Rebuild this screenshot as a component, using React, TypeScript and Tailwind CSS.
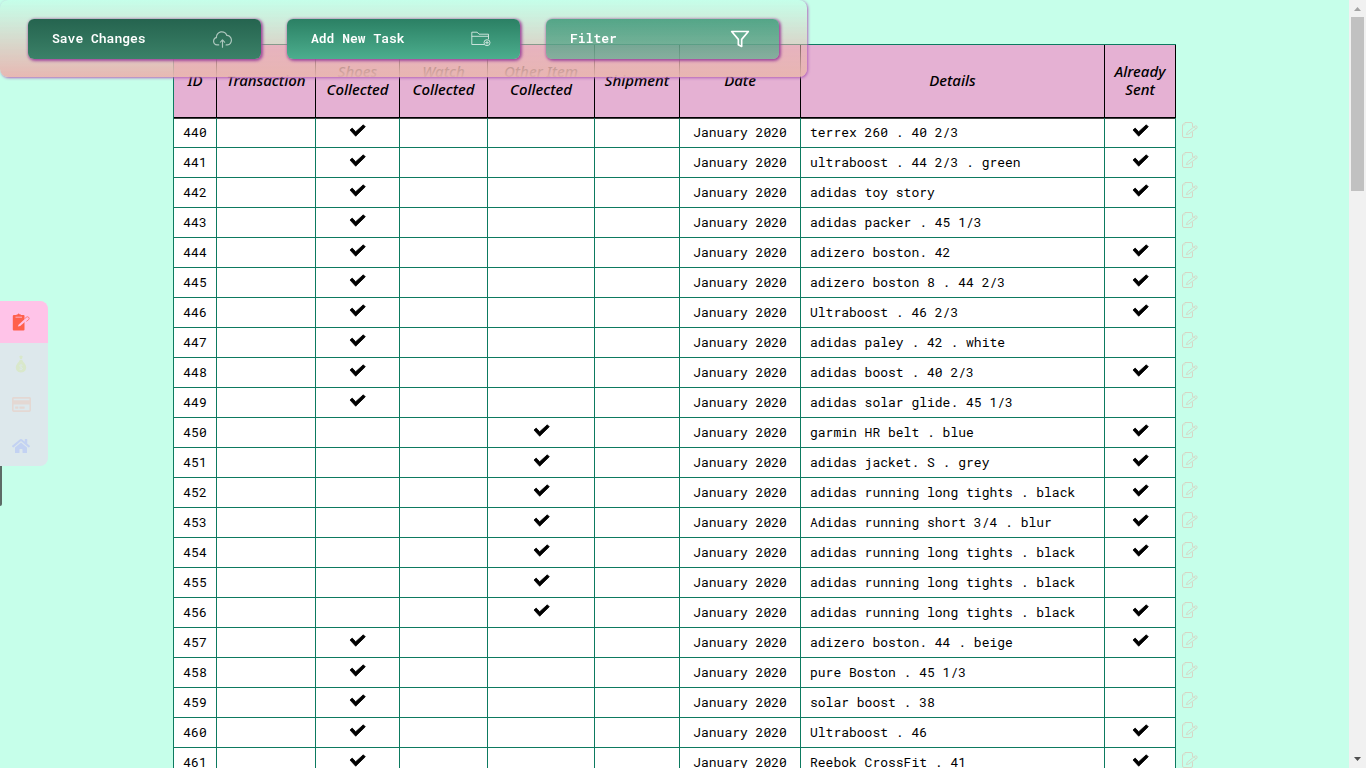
import React from "react";
import { SlCloudUpload } from "react-icons/sl";
import { FiFilter } from "react-icons/fi";
import { FaHome, FaRegCreditCard } from "react-icons/fa";

type Task = { id: number; item: "shoes" | "other"; details: string; sent: boolean };

const tasks: Task[] = [
  { id: 440, item: "shoes", details: "terrex 260 . 40 2/3", sent: true },
  { id: 441, item: "shoes", details: "ultraboost . 44 2/3 . green", sent: true },
  { id: 442, item: "shoes", details: "adidas toy story", sent: true },
  { id: 443, item: "shoes", details: "adidas packer . 45 1/3", sent: false },
  { id: 444, item: "shoes", details: "adizero boston. 42", sent: true },
  { id: 445, item: "shoes", details: "adizero boston 8 . 44 2/3", sent: true },
  { id: 446, item: "shoes", details: "Ultraboost . 46 2/3", sent: true },
  { id: 447, item: "shoes", details: "adidas paley . 42 . white", sent: false },
  { id: 448, item: "shoes", details: "adidas boost . 40 2/3", sent: true },
  { id: 449, item: "shoes", details: "adidas solar glide. 45 1/3", sent: false },
  { id: 450, item: "other", details: "garmin HR belt . blue", sent: true },
  { id: 451, item: "other", details: "adidas jacket. S . grey", sent: true },
  { id: 452, item: "other", details: "adidas running long tights . black", sent: true },
  { id: 453, item: "other", details: "Adidas running short 3/4 . blur", sent: true },
  { id: 454, item: "other", details: "adidas running long tights . black", sent: true },
  { id: 455, item: "other", details: "adidas running long tights . black", sent: false },
  { id: 456, item: "other", details: "adidas running long tights . black", sent: true },
  { id: 457, item: "shoes", details: "adizero boston. 44 . beige", sent: true },
  { id: 458, item: "shoes", details: "pure Boston . 45 1/3", sent: false },
  { id: 459, item: "shoes", details: "solar boost . 38", sent: false },
  { id: 460, item: "shoes", details: "Ultraboost . 46", sent: true },
  { id: 461, item: "shoes", details: "Reebok CrossFit . 41", sent: true },
];

const columns = [
  { title: "ID", width: "w-[43px]" },
  { title: "Transaction", width: "w-[99px]" },
  { title: "Shoes Collected", width: "w-[84px]" },
  { title: "Watch Collected", width: "w-[88px]" },
  { title: "Other Item Collected", width: "w-[107px]" },
  { title: "Shipment", width: "w-[85px]" },
  { title: "Date", width: "w-[121px]" },
  { title: "Details", width: "w-[304px]" },
  { title: "Already Sent", width: "w-[71px]" },
];

function EditIcon() {
  return (
    <svg width="16" height="16" viewBox="0 0 16 16" fill="none" stroke="currentColor" strokeLinejoin="round" strokeLinecap="round">
      <path d="M10.5 4.5V2Q10.5 .5 9 .5H3L.5 3V14Q.5 15.5 2 15.5H9Q10.5 15.5 10.5 14V10.5" />
      <path d="M3 1V3H1" strokeWidth=".5" />
      <path d="M4.5 12.3L5.3 10.2L12.8 4.2Q13.8 3.5 14.8 4.2Q15.6 5.2 14.8 6.2L7 11.8ZM12 4.8L13.9 6.8" strokeWidth=".9" />
    </svg>
  );
}

function FolderIcon() {
  return (
    <svg width="20" height="16" viewBox="0 0 20 16" fill="none" stroke="currentColor" strokeWidth=".9">
      <path d="M13 13.5H.8V1.2H6.2L8 3.2H17.5V8.2M.8 5.3H17.5" />
      <circle cx="16" cy="11.7" r="3" />
      <path d="M16 9.8V13.6M14.2 11.7H17.8" />
    </svg>
  );
}

function ClipboardIcon() {
  return (
    <svg width="18" height="18" viewBox="0 0 18 18">
      <path fill="currentColor" d="M2 2H4.5V1.5H5.5Q6.5-.5 7.8 1.5H9V2H11.5Q12.5 2 12.5 3V16.5Q12.5 17.5 11.5 17.5H1.8Q.8 17.5 .8 16.5V3Q.8 2 2 2Z" />
      <path d="M3.5 4.2H10" stroke="#ffc3e8" strokeWidth=".8" />
      <path d="M5.8 13.6L6.6 11.8L13.9 5L15.6 6.6L8.2 13Z" fill="#ffc3e8" />
      <path d="M12.6 5.8L14.2 4.3Q15.5 3.2 16.8 4.4Q17.7 5.6 16.6 6.7L14.4 8.4" fill="none" stroke="currentColor" strokeWidth="1" strokeOpacity=".7" />
    </svg>
  );
}

function MoneyBagIcon() {
  return (
    <svg width="18" height="18" viewBox="0 0 18 18">
      <path fill="currentColor" d="M7.3 1.2Q9-.2 10.7 1.2L10 4H8ZM7.8 4.8H10.2Q10.6 6.5 12.7 8.5Q15.4 12 13.3 15.4Q12 17.4 9 17.4T4.7 15.4Q2.6 12 5.3 8.5Q7.4 6.5 7.8 4.8Z" />
      <path d="M10.6 10.4Q9 9.4 7.8 10.3Q7.2 11.6 9 12.2T10.3 14Q9 15.2 7.4 14.1M9 9.3V15.3" stroke="#dde8ec" strokeWidth=".7" fill="none" />
    </svg>
  );
}

function Check() {
  return (
    <svg className="mx-auto -mt-1 block" width="17" height="13" viewBox="0 0 17 13" role="img" aria-label="Yes">
      <path d="M1 6L3.2 4.1L6.7 7.7L14.3 .8L16.3 2.8L6.7 12.2Z" stroke="black" strokeWidth=".8" strokeLinejoin="round" />
    </svg>
  );
}

const buttonBase =
  "flex h-10 w-[233px] items-center justify-between rounded-md pr-[29px] pl-6 font-semibold text-white shadow-[1px_1px_3px_1px_#a14a9c]";

export default function App() {
  return (
    <div className="flex h-screen overflow-hidden bg-[#c6ffea] font-['Roboto_Mono','Liberation_Mono',monospace] text-[13px] text-black">
      <header className="fixed top-0 left-0 z-10 flex gap-[26px] rounded-lg bg-linear-to-b from-[#e8b5b000] to-[#e8b5b0f5] pt-[19px] pr-7 pb-[18px] pl-7 shadow-[1px_1px_3px_#b060b8]">
        <button className={`${buttonBase} bg-linear-to-b from-[#25644f] to-[#3b8168]`}>
          Save Changes
          <SlCloudUpload size={19} className="opacity-60" />
        </button>
        <button className={`${buttonBase} bg-linear-to-b from-[#2b8064] to-[#4cae8e]`}>
          Add New Task
          <span className="opacity-80"><FolderIcon /></span>
        </button>
        <button className={`${buttonBase} bg-linear-to-b from-[#2b8e6cc0] to-[#5aad91b0]`}>
          Filter
          <FiFilter size={20} />
        </button>
      </header>

      <nav aria-label="Sections" className="fixed top-[301px] left-0 z-10 flex w-12 flex-col overflow-hidden rounded-r-lg bg-[#dde8ec]">
        <a href="#tasks" aria-label="Tasks" className="flex h-[42px] items-center bg-[#ffc3e8] pl-3 text-[#ff604c]"><ClipboardIcon /></a>
        <a href="#money" aria-label="Money" className="flex h-[41px] items-center pl-3 text-[#d9e8cb]"><MoneyBagIcon /></a>
        <a href="#cards" aria-label="Cards" className="flex h-[41px] items-center pl-3 text-[#e4d8d3]"><FaRegCreditCard size={19} /></a>
        <a href="#home" aria-label="Home" className="flex h-[41px] items-center pl-3 text-[#c3d2f2]"><FaHome size={18} /></a>
      </nav>
      <div className="fixed top-[466px] left-0 h-10 w-0.5 rounded-br bg-[#5c6b66]" />

      <main className="min-w-0 flex-1 pt-11">
        <table className="mx-auto w-[1003px] table-fixed border-separate border-spacing-0 border-t border-l border-[#0d7a60] bg-white">
          <thead>
            <tr className="h-[73px]">
              {columns.map((c) => (
                <th
                  key={c.title}
                  scope="col"
                  className={`${c.width} border-r border-b border-black bg-[#e5b1d3] px-1 pb-0.5 font-['Noto_Sans','Open_Sans',sans-serif] text-[15px] leading-[18px] font-medium italic shadow-[0_1px_0_#3f3f3f]`}
                >
                  {c.title}
                </th>
              ))}
            </tr>
          </thead>
          <tbody className="[&_td]:border-r [&_td]:border-b [&_td]:border-[#0d7a60]">
            {tasks.map((t) => (
              <tr key={t.id} className="h-[30px]">
                <td className="text-center">{t.id}</td>
                <td />
                <td>{t.item === "shoes" && <Check />}</td>
                <td />
                <td>{t.item === "other" && <Check />}</td>
                <td />
                <td className="text-center">January 2020</td>
                <td className="pl-[9px]">{t.details}</td>
                <td className="relative">
                  {t.sent && <Check />}
                  <button aria-label={`Edit task ${t.id}`} className="absolute top-1 left-full ml-[7px] text-[#d6d5c5]">
                    <EditIcon />
                  </button>
                </td>
              </tr>
            ))}
          </tbody>
        </table>
      </main>

      <div aria-hidden="true" className="flex w-[17px] flex-col items-center bg-[#f1f1f1] py-[7px]">
        <svg width="7" height="4" viewBox="0 0 7 4"><path d="M0 4L3.5 0L7 4Z" fill="#a3a3a3" /></svg>
        <div className="mt-1.5 h-[174px] w-[13px] bg-[#c1c1c1]" />
        <svg className="mt-auto" width="7" height="4" viewBox="0 0 7 4"><path d="M0 0L3.5 4L7 0Z" fill="#505050" /></svg>
      </div>
    </div>
  );
}
